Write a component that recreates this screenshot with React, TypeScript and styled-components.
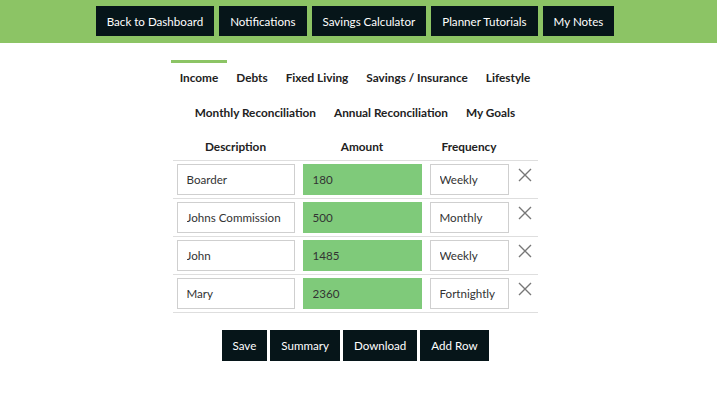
import React, { useState } from "react";
import styled, { createGlobalStyle } from "styled-components";

const GlobalStyle = createGlobalStyle`
    html, body {
        margin: 0;
        padding: 0;
        background: #ffffff;
        font-family: Lato, "Open Sans", Arial, sans-serif;
        color: #222;
    }
`;

type IncomeRow = {
    description: string;
    amount: string;
    frequency: string;
};

const NAV_LINKS = ["Back to Dashboard", "Notifications", "Savings Calculator", "Planner Tutorials", "My Notes"];
const TABS_TOP = ["Income", "Debts", "Fixed Living", "Savings / Insurance", "Lifestyle"];
const TABS_BOTTOM = ["Monthly Reconciliation", "Annual Reconciliation", "My Goals"];
const FREQUENCIES = ["Weekly", "Fortnightly", "Monthly", "Annually"];

const INITIAL_ROWS: IncomeRow[] = [
    { description: "Boarder", amount: "180", frequency: "Weekly" },
    { description: "Johns Commission", amount: "500", frequency: "Monthly" },
    { description: "John", amount: "1485", frequency: "Weekly" },
    { description: "Mary", amount: "2360", frequency: "Fortnightly" },
];

const Header = styled.header`
    background: #8cc465;
    height: 43px;
    box-sizing: border-box;
    padding: 6px 7px 0 0;
    display: flex;
    justify-content: center;
    align-items: flex-start;
    gap: 5px;
`;

const NavButton = styled.a`
    display: flex;
    align-items: center;
    height: 30px;
    padding: 0 11px;
    background: #061519;
    color: #fff;
    font-size: 11.6px;
    text-decoration: none;
    cursor: pointer;
`;

const Main = styled.main`
    display: flex;
    flex-direction: column;
    align-items: center;
    padding: 17px 7px 0 0;
`;

const TabRow = styled.nav`
    display: flex;
    justify-content: center;
    margin-bottom: 4px;
`;

const Tab = styled.button<{ $active?: boolean }>`
    border: none;
    border-top: 3px solid ${p => (p.$active ? "#8cc465" : "transparent")};
    background: none;
    padding: 7px 9px 5px;
    font-family: inherit;
    font-size: 11.8px;
    font-weight: 700;
    line-height: 16px;
    color: #222;
    cursor: pointer;
`;

const Table = styled.table`
    width: 365px;
    border-collapse: collapse;
    margin-top: 5px;
`;

const HeadCell = styled.th<{ $width: number }>`
    width: ${p => p.$width}px;
    padding: 4px 0 5px;
    font-size: 11.8px;
    font-weight: 700;
    line-height: 16px;
    color: #222;
    text-align: center;
`;

const Row = styled.tr`
    border-top: 1px solid #dedede;
    border-bottom: 1px solid #dedede;
`;

const Cell = styled.td`
    padding: 3px 4px 3px;
    vertical-align: top;
`;

const RemoveCell = styled.td`
    padding: 5px 0 0;
    vertical-align: top;
    text-align: center;
`;

const Field = styled.input<{ $highlight?: boolean }>`
    box-sizing: border-box;
    width: 100%;
    height: 31px;
    padding: 0 9px;
    border: 1px solid ${p => (p.$highlight ? "#7fca7a" : "#cfcfcf")};
    background: ${p => (p.$highlight ? "#7fca7a" : "#fff")};
    font-family: inherit;
    font-size: 11.6px;
    color: #333;
    outline: none;
`;

const Select = styled.select`
    box-sizing: border-box;
    width: 100%;
    height: 31px;
    padding: 0 9px;
    border: 1px solid #cfcfcf;
    border-radius: 0;
    background: #fff;
    appearance: none;
    font-family: inherit;
    font-size: 11.6px;
    color: #333;
    outline: none;
`;

const RemoveButton = styled.button`
    border: none;
    background: none;
    padding: 0;
    width: 14px;
    height: 14px;
    cursor: pointer;
    display: inline-flex;
`;

const Actions = styled.div`
    display: flex;
    gap: 3px;
    margin-top: 17px;
`;

const ActionButton = styled.button`
    height: 31px;
    padding: 0 11px;
    border: none;
    background: #061519;
    color: #fff;
    font-family: inherit;
    font-size: 11.6px;
    cursor: pointer;
`;

const CloseIcon = () => (
    <svg width="14" height="14" viewBox="0 0 14 14">
        <path d="M1 1 L13 13 M13 1 L1 13" stroke="#777" strokeWidth="1.4" fill="none" />
    </svg>
);

export default function App() {
    const [rows, setRows] = useState<IncomeRow[]>(INITIAL_ROWS);
    const [activeTab, setActiveTab] = useState("Income");

    const update = (index: number, key: keyof IncomeRow, value: string) => {
        setRows(rs => rs.map((r, i) => (i === index ? { ...r, [key]: value } : r)));
    };

    return (
        <>
            <GlobalStyle />
            <Header>
                {NAV_LINKS.map(link => (
                    <NavButton key={link}>{link}</NavButton>
                ))}
            </Header>
            <Main>
                <TabRow>
                    {TABS_TOP.map(tab => (
                        <Tab key={tab} $active={tab === activeTab} onClick={() => setActiveTab(tab)}>{tab}</Tab>
                    ))}
                </TabRow>
                <TabRow>
                    {TABS_BOTTOM.map(tab => (
                        <Tab key={tab} $active={tab === activeTab} onClick={() => setActiveTab(tab)}>{tab}</Tab>
                    ))}
                </TabRow>
                <Table>
                    <thead>
                        <tr>
                            <HeadCell $width={126}>Description</HeadCell>
                            <HeadCell $width={127}>Amount</HeadCell>
                            <HeadCell $width={87}>Frequency</HeadCell>
                            <HeadCell $width={25} />
                        </tr>
                    </thead>
                    <tbody>
                        {rows.map((row, i) => (
                            <Row key={i}>
                                <Cell>
                                    <Field value={row.description} onChange={e => update(i, "description", e.target.value)} />
                                </Cell>
                                <Cell>
                                    <Field $highlight value={row.amount} onChange={e => update(i, "amount", e.target.value)} />
                                </Cell>
                                <Cell>
                                    <Select value={row.frequency} onChange={e => update(i, "frequency", e.target.value)}>
                                        {FREQUENCIES.map(f => <option key={f}>{f}</option>)}
                                    </Select>
                                </Cell>
                                <RemoveCell>
                                    <RemoveButton onClick={() => setRows(rs => rs.filter((_, j) => j !== i))}>
                                        <CloseIcon />
                                    </RemoveButton>
                                </RemoveCell>
                            </Row>
                        ))}
                    </tbody>
                </Table>
                <Actions>
                    <ActionButton>Save</ActionButton>
                    <ActionButton>Summary</ActionButton>
                    <ActionButton>Download</ActionButton>
                    <ActionButton onClick={() => setRows(rs => [...rs, { description: "", amount: "", frequency: "Weekly" }])}>Add Row</ActionButton>
                </Actions>
            </Main>
        </>
    );
}
